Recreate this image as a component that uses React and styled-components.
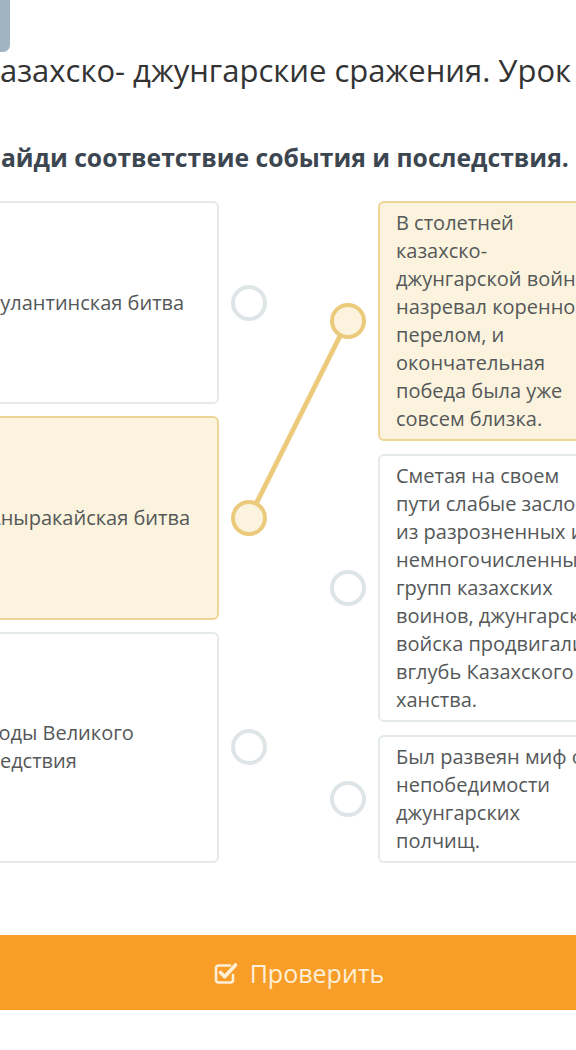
import React from "react";
import styled, { createGlobalStyle } from "styled-components";

const Global = createGlobalStyle`
  html, body { margin: 0; padding: 0; background: #ffffff; }
  body { font-family: "Open Sans", "Noto Sans", sans-serif; }
  * { box-sizing: border-box; }
`;

const Viewport = styled.div`
  width: 576px;
  height: 1050px;
  overflow: hidden;
  background: #fff;
`;

const Page = styled.div`
  width: 657px;
  margin-left: -30px;
`;

const TopBar = styled.div`
  height: 52px;
  display: flex;
`;

const BackTab = styled.div`
  width: 40px;
  height: 52px;
  background: #9fb5c1;
  border-bottom-right-radius: 7px;
`;

const Title = styled.h1`
  margin: 0;
  padding-left: 11px;
  font-weight: 400;
  font-size: 31px;
  line-height: 36px;
  color: #333;
  white-space: nowrap;
`;

const Task = styled.h2`
  margin: 55px 0 0;
  padding-left: 12px;
  font-weight: 700;
  font-size: 24.7px;
  line-height: 30px;
  color: #3c4650;
  white-space: nowrap;
`;

const MatchArea = styled.div`
  position: relative;
  margin-top: 28px;
  display: grid;
  grid-template-columns: 297px 297px;
  column-gap: 63px;
`;

const Column = styled.div`
  display: flex;
  flex-direction: column;
  gap: ${(p) => p.$gap}px;
`;

const Item = styled.div`
  display: flex;
  align-items: center;
  gap: 12px;
  flex: ${(p) => (p.$grow ? "1 1 auto" : "0 0 auto")};
`;

const Card = styled.div`
  width: 249px;
  flex: 0 0 auto;
  align-self: stretch;
  display: flex;
  flex-direction: column;
  justify-content: center;
  padding: 6px 16px;
  border: 2px solid ${(p) => (p.$active ? "#eed595" : "#e4e9eb")};
  background: ${(p) => (p.$active ? "#fbf3dd" : "#ffffff")};
  border-radius: 6px;
  font-size: 20px;
  line-height: 28px;
  color: #555859;
  white-space: nowrap;
  overflow: hidden;
`;

const Line = styled.span`
  display: block;
`;

const Dot = styled.div`
  position: relative;
  z-index: 1;
  flex: 0 0 auto;
  width: 36px;
  height: 36px;
  border-radius: 50%;
  border: 4px solid ${(p) => (p.$active ? "#ebca7b" : "#dfe5e7")};
  background: ${(p) => (p.$active ? "#fbf3dd" : "#ffffff")};
`;

const Links = styled.svg`
  position: absolute;
  left: 0;
  top: 0;
  width: 100%;
  height: 100%;
  pointer-events: none;
  z-index: 0;
`;

const CheckButton = styled.button`
  margin-top: 72px;
  width: 100%;
  height: 75px;
  border: 0;
  background: #f99d29;
  color: #fef0d8;
  display: flex;
  align-items: center;
  justify-content: center;
  gap: 11px;
  font-family: "Open Sans", "Noto Sans", sans-serif;
  font-size: 25px;
  padding: 0;
`;

const left = [
  { lines: ["Булантинская битва"] },
  { lines: ["Аныракайская битва"], active: true },
  { lines: ["Годы Великого", "бедствия"] },
];

const right = [
  {
    lines: [
      "В столетней",
      "казахско-",
      "джунгарской войне",
      "назревал коренной",
      "перелом, и",
      "окончательная",
      "победа была уже",
      "совсем близка.",
    ],
    active: true,
  },
  {
    lines: [
      "Сметая на своем",
      "пути слабые заслоны",
      "из разрозненных и",
      "немногочисленных",
      "групп казахских",
      "воинов, джунгарские",
      "войска продвигались",
      "вглубь Казахского",
      "ханства.",
    ],
  },
  { lines: ["Был развеян миф о", "непобедимости", "джунгарских", "полчищ."] },
];

const CheckIcon = () => (
  <svg width="26" height="24" viewBox="0 0 26 24" fill="none">
    <path
      d="M17 4.5H5.5A2.5 2.5 0 0 0 3 7v12a2.5 2.5 0 0 0 2.5 2.5h12A2.5 2.5 0 0 0 20 19v-5"
      stroke="#fef0d8"
      strokeWidth="2.6"
      strokeLinecap="round"
    />
    <path
      d="M7.5 11.5l4.2 4.2L22.5 4"
      stroke="#fef0d8"
      strokeWidth="3.6"
      strokeLinecap="round"
      strokeLinejoin="round"
    />
  </svg>
);

const CardText = ({ lines }) =>
  lines.map((l) => <Line key={l}>{l}</Line>);

export default function App() {
  return (
    <Viewport>
      <Global />
      <Page>
        <TopBar>
          <BackTab />
        </TopBar>
        <Title>Казахско- джунгарские сражения. Урок 2</Title>
        <Task>Найди соответствие события и последствия.</Task>
        <MatchArea>
          <Links>
            <line
              x1="378"
              y1="119"
              x2="279"
              y2="317"
              stroke="#ebca7b"
              strokeWidth="5"
            />
          </Links>
          <Column $gap={12}>
            {left.map((it) => (
              <Item key={it.lines[0]} $grow>
                <Card $active={it.active}>
                  <CardText lines={it.lines} />
                </Card>
                <Dot $active={it.active} />
              </Item>
            ))}
          </Column>
          <Column $gap={13}>
            {right.map((it) => (
              <Item key={it.lines[0]}>
                <Dot $active={it.active} />
                <Card $active={it.active}>
                  <CardText lines={it.lines} />
                </Card>
              </Item>
            ))}
          </Column>
        </MatchArea>
        <CheckButton>
          <CheckIcon />
          Проверить
        </CheckButton>
      </Page>
    </Viewport>
  );
}
